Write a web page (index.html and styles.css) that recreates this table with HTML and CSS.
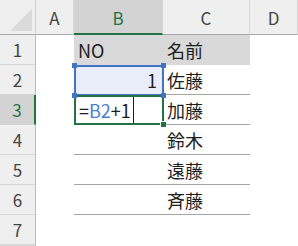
FILE: index.html
```html
<!DOCTYPE html>
<html lang="ja">
<head>
<meta charset="utf-8">
<title>Sheet1</title>
<link rel="stylesheet" href="styles.css">
</head>
<body>
<div class="sheet">
  <!-- column headers -->
  <div class="corner"><span class="corner-tri"></span></div>
  <div class="colhead">A</div>
  <div class="colhead active">B</div>
  <div class="colhead">C</div>
  <div class="colhead">D</div>

  <!-- row 1 -->
  <div class="rowhead">1</div>
  <div class="cell"></div>
  <div class="cell fill">NO</div>
  <div class="cell fill">名前</div>
  <div class="cell"></div>

  <!-- row 2 -->
  <div class="rowhead">2</div>
  <div class="cell"></div>
  <div class="cell num ref">1
    <span class="ref-frame"></span>
    <span class="knob tl"></span><span class="knob tr"></span>
    <span class="knob bl"></span><span class="knob br"></span>
  </div>
  <div class="cell line">佐藤</div>
  <div class="cell"></div>

  <!-- row 3 -->
  <div class="rowhead active">3</div>
  <div class="cell"></div>
  <div class="cell line editing">
    <span class="formula">=<span class="ref-text">B2</span>+1</span><span class="caret"></span>
    <span class="edit-frame"></span>
    <span class="fill-handle"></span>
  </div>
  <div class="cell line">加藤</div>
  <div class="cell"></div>

  <!-- row 4 -->
  <div class="rowhead">4</div>
  <div class="cell"></div>
  <div class="cell line"></div>
  <div class="cell line">鈴木</div>
  <div class="cell"></div>

  <!-- row 5 -->
  <div class="rowhead">5</div>
  <div class="cell"></div>
  <div class="cell line"></div>
  <div class="cell line">遠藤</div>
  <div class="cell"></div>

  <!-- row 6 -->
  <div class="rowhead">6</div>
  <div class="cell"></div>
  <div class="cell line"></div>
  <div class="cell line">斉藤</div>
  <div class="cell"></div>

  <!-- row 7 -->
  <div class="rowhead">7</div>
  <div class="cell"></div>
  <div class="cell"></div>
  <div class="cell"></div>
  <div class="cell"></div>

  <!-- row 8 (partly visible) -->
  <div class="rowhead"></div>
  <div class="cell"></div>
  <div class="cell"></div>
  <div class="cell"></div>
  <div class="cell"></div>
</div>
</body>
</html>
```

FILE: styles.css
```css
html, body {
  margin: 0;
  padding: 0;
  background: #ffffff;
  overflow: hidden;
}

.sheet {
  display: grid;
  grid-template-columns: 36px 38px 89px 87px 48px;
  grid-template-rows: 35px repeat(7, 30px) 1fr;
  width: 298px;
  height: 246px;
  overflow: hidden;
  font-family: "Noto Sans CJK JP", "Noto Sans", sans-serif;
  font-size: 18px;
  color: #1e1e1e;
}

.sheet > div {
  box-sizing: border-box;
  min-width: 0;
  min-height: 0;
}

/* header strip */
.corner {
  position: relative;
  background: #efefef;
  border-right: 1px solid #d2d2d2;
  border-bottom: 1px solid #a8a8a8;
}

.corner-tri {
  position: absolute;
  right: 3px;
  bottom: 3px;
  width: 0;
  height: 0;
  border-left: 22px solid transparent;
  border-bottom: 22px solid #dadada;
}

.colhead {
  display: flex;
  align-items: center;
  justify-content: center;
  background: #efefef;
  color: #444444;
  font-size: 17px;
  border-right: 1px solid #d6d6d6;
  border-bottom: 1px solid #a8a8a8;
  padding-top: 1px;
}

.colhead.active {
  background: #d3d3d3;
  color: #217346;
  border-bottom: 2px solid #217346;
}

.rowhead {
  display: flex;
  align-items: center;
  justify-content: center;
  background: #efefef;
  color: #444444;
  font-size: 17px;
  border-right: 1px solid #bcbcbc;
  border-bottom: 1px solid #d6d6d6;
}

.rowhead.active {
  background: #d3d3d3;
  color: #217346;
  border-right: 2px solid #217346;
}

/* worksheet cells */
.cell {
  position: relative;
  display: flex;
  align-items: center;
  padding: 0 5px 0 4px;
  white-space: nowrap;
}

.cell.fill {
  background: #d9d9d9;
}

.cell.line {
  border-bottom: 1px solid #a6a6a6;
}

.cell.num {
  justify-content: flex-end;
  padding-right: 6px;
}

/* precedent highlight on B2 */
.cell.ref {
  background: #e8edf8;
}

.ref-frame {
  position: absolute;
  left: 0;
  top: 0;
  right: -1px;
  bottom: -1px;
  border: 2px solid #4472c4;
}

.knob {
  position: absolute;
  width: 5px;
  height: 5px;
  background: #4472c4;
  z-index: 2;
}

.knob.tl { left: -2px; top: -2px; }
.knob.tr { right: -3px; top: -2px; }
.knob.bl { left: -2px; bottom: -3px; }
.knob.br { right: -3px; bottom: -3px; }

/* cell in edit mode */
.cell.editing {
  padding-left: 5px;
}

.formula {
  color: #1e1e1e;
}

.ref-text {
  color: #4a7fd4;
}

.caret {
  display: block;
  width: 1px;
  height: 26px;
  margin-left: 2px;
  background: #1e1e1e;
}

.edit-frame {
  position: absolute;
  left: 0;
  top: 0;
  right: -1px;
  bottom: -1px;
  border: 2px solid #217346;
  z-index: 1;
}

.fill-handle {
  position: absolute;
  right: -3px;
  bottom: -3px;
  width: 5px;
  height: 5px;
  background: #217346;
  border-left: 1px solid #ffffff;
  border-top: 1px solid #ffffff;
  z-index: 2;
}
```
